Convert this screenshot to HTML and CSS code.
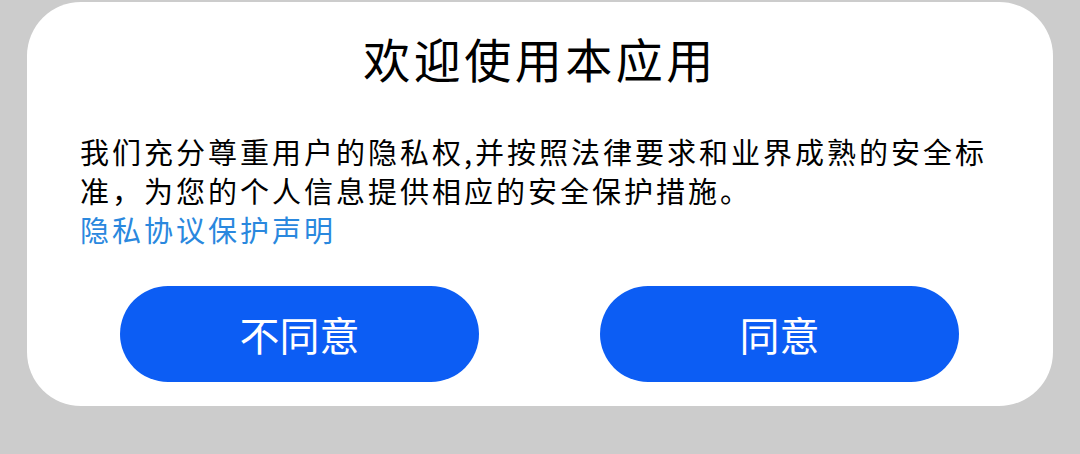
FILE: index.html
```html
<!DOCTYPE html>
<html>
<head>
  <meta charset="utf-8">
  <title>欢迎使用本应用</title>
  <link rel="stylesheet" href="styles.css">
</head>
<body>
  <div class="dialog">
    <h1 class="dialog-title">欢迎使用本应用</h1>
    <p class="dialog-text">我们充分尊重用户的隐私权,并按照法律要求和业界成熟的安全标准，为您的个人信息提供相应的安全保护措施。</p>
    <a class="dialog-link" href="#">隐私协议保护声明</a>
    <div class="dialog-buttons">
      <button class="btn" type="button">不同意</button>
      <button class="btn" type="button">同意</button>
    </div>
  </div>
</body>
</html>
```

FILE: styles.css
```css
body {
  margin: 0;
  background-color: #cccccc;
  font-family: "Noto Sans CJK SC", "Noto Sans", sans-serif;
}

.dialog {
  margin: 2px 27px 0;
  height: 404px;
  box-sizing: border-box;
  padding: 26px 53px 0;
  background-color: #ffffff;
  border-radius: 54px;
}

.dialog-title {
  margin: 0;
  font-size: 47px;
  font-weight: normal;
  line-height: 60px;
  letter-spacing: 3.5px;
  text-align: center;
  color: #000000;
}

.dialog-text {
  margin: 44px 0 0;
  font-size: 29px;
  line-height: 39px;
  letter-spacing: 3px;
  color: #000000;
}

.dialog-link {
  display: block;
  font-size: 29px;
  line-height: 39px;
  letter-spacing: 3px;
  color: #2a88de;
  text-decoration: none;
}

.dialog-buttons {
  display: flex;
  justify-content: space-between;
  padding: 0 41px 0 40px;
  margin-top: 37px;
}

.btn {
  width: 359px;
  height: 96px;
  border: none;
  border-radius: 48px;
  background-color: #0c5df4;
  color: #ffffff;
  font-family: "Noto Sans CJK SC", "Noto Sans", sans-serif;
  font-size: 40px;
  cursor: pointer;
}
```
